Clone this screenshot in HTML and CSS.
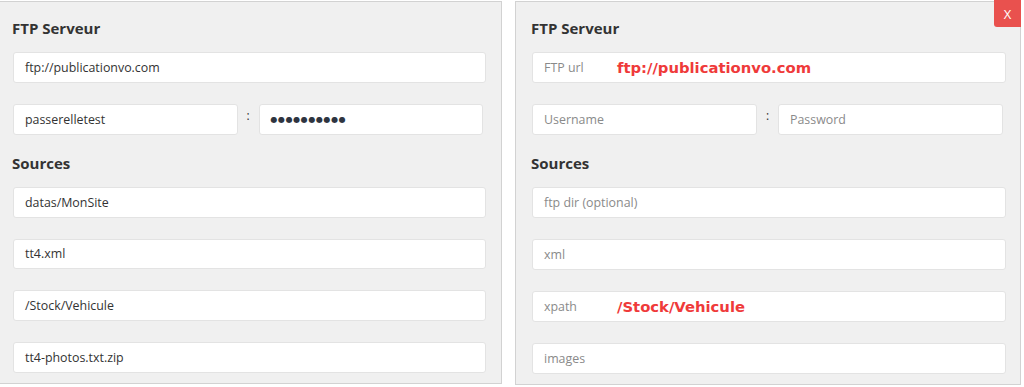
FILE: index.html
```html
<!DOCTYPE html>
<html lang="fr">
<head>
<meta charset="utf-8">
<title>FTP Serveur</title>
<link rel="stylesheet" href="styles.css">
</head>
<body>
<div class="wrap">
  <section class="panel panel-left">
    <h2 class="title">FTP Serveur</h2>
    <div class="field">ftp://publicationvo.com</div>
    <div class="pair">
      <div class="field">passerelletest</div>
      <span class="colon">:</span>
      <div class="field"><span class="dots">●●●●●●●●●●</span></div>
    </div>
    <h2 class="title title-sources">Sources</h2>
    <div class="field">datas/MonSite</div>
    <div class="field">tt4.xml</div>
    <div class="field">/Stock/Vehicule</div>
    <div class="field">tt4-photos.txt.zip</div>
  </section>
  <section class="panel panel-right">
    <button class="close">X</button>
    <h2 class="title">FTP Serveur</h2>
    <div class="field"><span class="ph ph-label">FTP url</span><span class="note">ftp://publicationvo.com</span></div>
    <div class="pair">
      <div class="field"><span class="ph">Username</span></div>
      <span class="colon">:</span>
      <div class="field"><span class="ph">Password</span></div>
    </div>
    <h2 class="title title-sources">Sources</h2>
    <div class="field"><span class="ph">ftp dir (optional)</span></div>
    <div class="field"><span class="ph">xml</span></div>
    <div class="field"><span class="ph ph-label">xpath</span><span class="note">/Stock/Vehicule</span></div>
    <div class="field"><span class="ph">images</span></div>
  </section>
</div>
</body>
</html>
```
FILE: styles.css
```css
html, body {
  margin: 0;
  padding: 0;
  background: #ffffff;
}

body {
  font-family: "Open Sans", "Noto Sans", sans-serif;
  color: #333333;
}

.wrap {
  display: flex;
  gap: 13px;
  padding-top: 1px;
  margin-left: -1px;
}

.panel {
  position: relative;
  display: flex;
  flex-direction: column;
  background: #f0f0f0;
  border: 1px solid #d2d2d2;
  box-sizing: border-box;
}

.panel-left {
  width: 503px;
  height: 383px;
  padding: 0 15px 10px 13px;
}

.panel-right {
  width: 506px;
  height: 384px;
  padding: 0 14px 10px 16px;
}

.title {
  margin: 15px 0 13px -1px;
  height: 22px;
  line-height: 22px;
  font-size: 15px;
  font-weight: 700;
  color: #333333;
}

.title-sources {
  margin-top: 17px;
}

.field {
  box-sizing: border-box;
  height: 31px;
  display: flex;
  align-items: center;
  padding: 0 11px;
  background: #ffffff;
  border: 1px solid #e3e3e3;
  border-radius: 3px;
  font-size: 12.4px;
  color: #333333;
  margin-bottom: 21px;
}

.field:last-child {
  margin-bottom: 0;
}

.pair {
  display: grid;
  grid-template-columns: 1fr 21px 1fr;
  margin-right: 3px;
  margin-bottom: 0;
}

.pair .field {
  margin-bottom: 0;
}

.colon {
  text-align: center;
  font-size: 12px;
  line-height: 24px;
  color: #333333;
}

.ph {
  color: #8a8a8a;
}

.ph-label {
  width: 73px;
}

.note {
  font-family: "DejaVu Sans", sans-serif;
  font-weight: 700;
  font-size: 14.8px;
  color: #ef3a3a;
}

.dots {
  font-family: "DejaVu Sans", sans-serif;
  font-size: 8px;
  letter-spacing: 0.6px;
  color: #2e3440;
}

.close {
  position: absolute;
  top: -2px;
  right: -1px;
  width: 27px;
  height: 27px;
  border: none;
  border-radius: 0 0 0 3px;
  background: #e9514e;
  color: #ffffff;
  font-family: "Open Sans", sans-serif;
  font-size: 13px;
  padding: 0;
}
```
